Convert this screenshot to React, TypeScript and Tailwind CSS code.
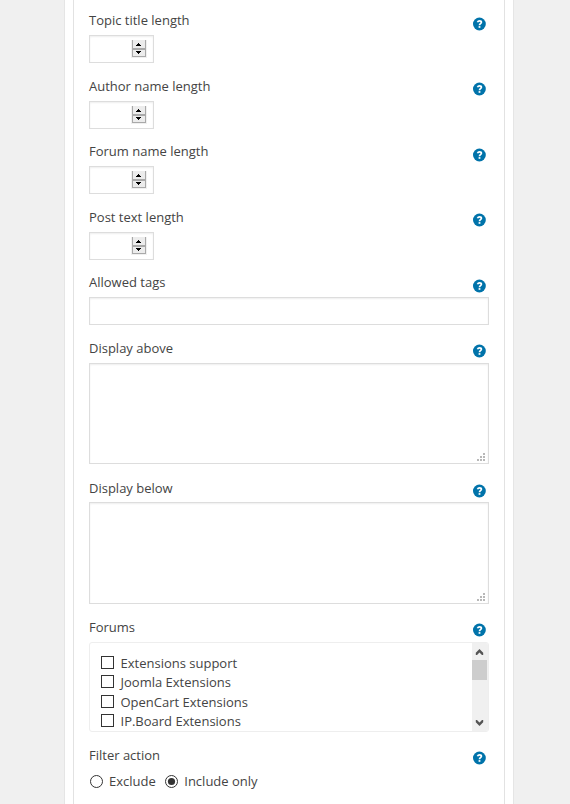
import React from "react";

function Help({ className }: { className: string }) {
  return (
    <svg className={`mr-[3px] block shrink-0 ${className}`} width="13" height="14" viewBox="0 0 13 14">
      <circle cx="6.4" cy="7" r="6.4" fill="#0073aa" />
      <path d="M4.5 5.2C4.9 4.2 5.6 3.8 6.5 3.8c1.2 0 1.9.6 1.9 1.5 0 1.3-1.9 1.4-1.9 2.9" fill="none" stroke="#fff" strokeWidth="1.7" />
      <rect x="5.6" y="9.1" width="1.8" height="1.7" fill="#fff" />
    </svg>
  );
}

interface FieldProps {
  label: string;
  className: string;
  help?: string;
  text?: string;
  children: React.ReactNode;
}

function Field({ label, className, help = "mt-[11px]", text = "pt-[6px]", children }: FieldProps) {
  return (
    <div className={className}>
      <div className="flex h-[30px] items-start justify-between">
        <span className={`leading-[18px] ${text}`}>{label}</span>
        <Help className={help} />
      </div>
      {children}
    </div>
  );
}

const box = "border border-[#ddd] bg-white shadow-[inset_0_1px_2px_rgba(0,0,0,0.07)]";

function Spinner() {
  return (
    <div className={`flex h-[28px] w-[65px] items-start justify-end pr-[6px] pt-[4px] ${box}`}>
      <svg width="16" height="18" viewBox="0 0 16 18" shapeRendering="crispEdges">
        <rect width="16" height="18" fill="#f0f0f0" />
        <rect x="1" width="14" height="17" fill="#a9a9a9" />
        <rect x="2" width="12" height="8" fill="#ececec" />
        <rect x="2" y="10" width="12" height="6" fill="#ececec" />
        <path d="M7 3h1v1H7zM6 4h3v1H6zM5 5h5v1H5zM5 11h5v1H5zM6 12h3v1H6zM7 13h1v1H7z" fill="#000" />
      </svg>
    </div>
  );
}

function TextArea({ className }: { className: string }) {
  return (
    <div className={`flex items-end justify-end pr-[3px] pb-[2px] ${box} ${className}`}>
      <svg width="8" height="8" viewBox="0 0 8 8" shapeRendering="crispEdges" fill="#b8b8b8">
        <path d="M6 0h2v2H6zM3 3h2v2H3zM6 3h2v2H6zM0 6h2v2H0zM3 6h2v2H3zM6 6h2v2H6z" />
      </svg>
    </div>
  );
}

function Check({ label, className }: { label: string; className: string }) {
  return (
    <div className={`flex items-start ${className}`}>
      <span className="mr-[6.5px] mt-[3px] h-[13px] w-[13px] border border-[#333] bg-white" />
      <span className="leading-[21px]">{label}</span>
    </div>
  );
}

function Radio({ label, checked }: { label: string; checked?: boolean }) {
  return (
    <div className="flex items-center">
      <svg className="mr-[6px]" width="14" height="14" viewBox="0 0 14 14">
        <circle cx="7.5" cy="7.5" r="6" fill="#fff" stroke="#333" />
        {checked && <circle cx="7.5" cy="7.5" r="3.6" fill="#333" />}
      </svg>
      <span className="leading-[18px]">{label}</span>
    </div>
  );
}

export default function App() {
  return (
    <div className="flex h-[804px] w-[570px] overflow-hidden bg-[#f0f0f0] pl-[64px] font-['Open_Sans',sans-serif] text-[13px] text-[#444]">
      <div className="w-[450px] border-x border-[#e5e5e5] bg-white px-[8px]">
        <div className="h-full w-[432px] border-x border-[#e2e2e2] px-[15px] pt-[5px]">
          <Field label="Topic title length" className="h-[66px]" help="mt-[12px]"><Spinner /></Field>
          <Field label="Author name length" className="h-[65px]"><Spinner /></Field>
          <Field label="Forum name length" className="h-[66px]" help="mt-[12px]"><Spinner /></Field>
          <Field label="Post text length" className="h-[65px]"><Spinner /></Field>
          <Field label="Allowed tags" className="h-[66px]" help="mt-[12px]">
            <div className={`h-[28px] w-full ${box}`} />
          </Field>
          <Field label="Display above" className="h-[139px]"><TextArea className="h-[101px]" /></Field>
          <Field label="Display below" className="h-[140px]" help="mt-[12px]" text="pt-[7px]"><TextArea className="h-[102px]" /></Field>
          <Field label="Forums" className="h-[128px]">
            <div className="flex h-[90px] justify-between overflow-hidden rounded-[3px] border border-[#eee]">
              <div className="pl-[11px] pt-[10px]">
                <Check label="Extensions support" className="h-[19px]" />
                <Check label="Joomla Extensions" className="h-[20px]" />
                <Check label="OpenCart Extensions" className="h-[19px]" />
                <Check label="IP.Board Extensions" className="h-[19px]" />
              </div>
              <div className="flex w-[16px] flex-col items-start bg-[#f0f0f0]">
                <svg className="h-[17px] w-[15px]" viewBox="0 0 15 17">
                  <path d="M7.5 6 11.2 9.7V12H10L7.5 9.5 5 12H3.8V9.7z" fill="#555" />
                </svg>
                <div className="h-[20px] w-[15px] bg-[#cdcdcd]" />
                <svg className="mt-auto h-[17px] w-[15px]" viewBox="0 0 15 17">
                  <path d="M7.5 12 11.2 8.3V6H10L7.5 8.5 5 6H3.8v2.3z" fill="#555" />
                </svg>
              </div>
            </div>
          </Field>
          <Field label="Filter action" className="h-[64px]">
            <div className="flex h-[22px] items-center gap-[8px]">
              <Radio label="Exclude" />
              <div className="pl-[0.5px]"><Radio label="Include only" checked /></div>
            </div>
          </Field>
        </div>
      </div>
    </div>
  );
}
